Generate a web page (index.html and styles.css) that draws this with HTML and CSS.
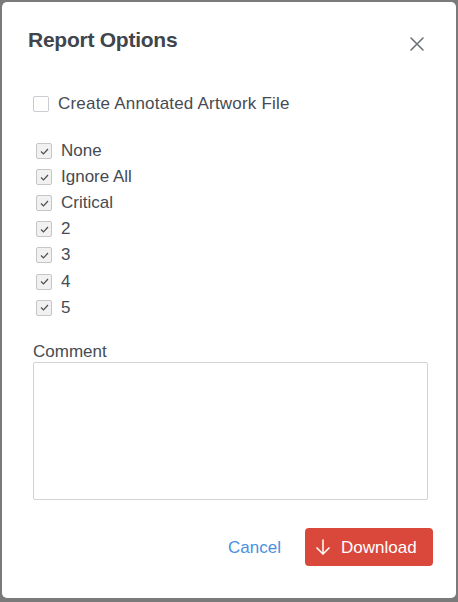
FILE: index.html
```html
<!DOCTYPE html>
<html>
<head>
<meta charset="utf-8">
<title>Report Options</title>
<link rel="stylesheet" href="styles.css">
</head>
<body>
<div class="modal">
  <div class="modal-header">
    <h2 class="modal-title">Report Options</h2>
    <button class="close" aria-label="Close">
      <svg width="14" height="14" viewBox="0 0 14 14"><path d="M1 1 L13 13 M13 1 L1 13" stroke="#6b717a" stroke-width="1.6" fill="none" stroke-linecap="round"/></svg>
    </button>
  </div>
  <div class="modal-body">
    <label class="row main-row"><span class="box"></span><span class="label">Create Annotated Artwork File</span></label>
    <div class="list">
      <label class="row"><span class="box checked"><svg width="9" height="7" viewBox="0 0 9 7"><path d="M1 3.5 L3.5 6 L8 1" stroke="#4a4f55" stroke-width="1.2" fill="none"/></svg></span><span class="label">None</span></label>
      <label class="row"><span class="box checked"><svg width="9" height="7" viewBox="0 0 9 7"><path d="M1 3.5 L3.5 6 L8 1" stroke="#4a4f55" stroke-width="1.2" fill="none"/></svg></span><span class="label">Ignore All</span></label>
      <label class="row"><span class="box checked"><svg width="9" height="7" viewBox="0 0 9 7"><path d="M1 3.5 L3.5 6 L8 1" stroke="#4a4f55" stroke-width="1.2" fill="none"/></svg></span><span class="label">Critical</span></label>
      <label class="row"><span class="box checked"><svg width="9" height="7" viewBox="0 0 9 7"><path d="M1 3.5 L3.5 6 L8 1" stroke="#4a4f55" stroke-width="1.2" fill="none"/></svg></span><span class="label">2</span></label>
      <label class="row"><span class="box checked"><svg width="9" height="7" viewBox="0 0 9 7"><path d="M1 3.5 L3.5 6 L8 1" stroke="#4a4f55" stroke-width="1.2" fill="none"/></svg></span><span class="label">3</span></label>
      <label class="row"><span class="box checked"><svg width="9" height="7" viewBox="0 0 9 7"><path d="M1 3.5 L3.5 6 L8 1" stroke="#4a4f55" stroke-width="1.2" fill="none"/></svg></span><span class="label">4</span></label>
      <label class="row"><span class="box checked"><svg width="9" height="7" viewBox="0 0 9 7"><path d="M1 3.5 L3.5 6 L8 1" stroke="#4a4f55" stroke-width="1.2" fill="none"/></svg></span><span class="label">5</span></label>
    </div>
    <div class="comment-label">Comment</div>
    <textarea class="comment"></textarea>
  </div>
  <div class="modal-footer">
    <button class="btn-cancel">Cancel</button>
    <button class="btn-download">
      <svg width="16" height="16" viewBox="0 0 16 16"><path d="M8 0.5 V15 M1.5 8.5 L8 15 L14.5 8.5" stroke="#fff" stroke-width="1.5" fill="none"/></svg>
      <span class="btn-text">Download</span>
    </button>
  </div>
</div>
</body>
</html>
```
FILE: styles.css
```css
html, body {
  margin: 0;
  padding: 0;
}
body {
  background: #7a7a7a;
  width: 458px;
  height: 602px;
  overflow: hidden;
  font-family: "Liberation Sans", Arial, sans-serif;
  color: #464b53;
}
.modal {
  margin: 2px 2px 4px 2px;
  width: 454px;
  height: 596px;
  background: #fff;
  border-radius: 5px;
  box-sizing: border-box;
  display: flex;
  flex-direction: column;
}
.modal-header {
  display: flex;
  justify-content: space-between;
  align-items: flex-start;
  padding: 25px 32px 0 26px;
}
.modal-title {
  margin: 0;
  font-size: 21px;
  line-height: 25px;
  font-weight: bold;
  letter-spacing: -0.25px;
  color: #3f454c;
}
.close {
  margin: 10px 0 0 0;
  padding: 0;
  border: 0;
  background: none;
  width: 14px;
  height: 14px;
  display: block;
}
.close svg { display: block; }
.modal-body {
  padding: 0 28px 0 31px;
  display: flex;
  flex-direction: column;
}
.row {
  display: flex;
  align-items: center;
  height: 26.1px;
  font-size: 17px;
}
.main-row {
  margin-top: 40px;
  height: 24px;
}
.main-row .label {
  letter-spacing: 0.2px;
}
.box {
  width: 14px;
  height: 14px;
  border: 1px solid #c9ccd0;
  border-radius: 2px;
  background: #fff;
  flex: none;
  display: flex;
  align-items: center;
  justify-content: center;
}
.main-row .box {
  margin-left: 0;
  margin-right: 9px;
}
.box.checked {
  background: #f1f1f1;
  border-color: #c6c6c6;
  margin-left: 3px;
  margin-right: 9px;
}
.box svg { display: block; }
.list {
  margin-top: 22px;
  display: flex;
  flex-direction: column;
}
.comment-label {
  margin-top: 20px;
  font-size: 17px;
  line-height: 21px;
}
.comment {
  width: 395px;
  height: 138px;
  box-sizing: border-box;
  border: 1px solid #cfd3d8;
  border-radius: 2px;
  resize: none;
  margin: 0;
  display: block;
}
.modal-footer {
  margin-top: 28px;
  display: flex;
  justify-content: flex-end;
  align-items: center;
  gap: 24px;
  padding-right: 23px;
}
.btn-cancel {
  border: 0;
  background: none;
  padding: 3px 0 0 0;
  font-family: "Liberation Sans", Arial, sans-serif;
  font-size: 17px;
  color: #4a90e2;
}
.btn-download {
  display: flex;
  align-items: center;
  gap: 10px;
  height: 38px;
  width: 128px;
  box-sizing: border-box;
  padding: 0 0 0 10px;
  border: 0;
  border-radius: 4px;
  background: #d9483b;
  color: #fff;
  font-family: "Liberation Sans", Arial, sans-serif;
  font-size: 17px;
}
.btn-text {
  padding-top: 3px;
}
.btn-download svg { display: block; }
```
